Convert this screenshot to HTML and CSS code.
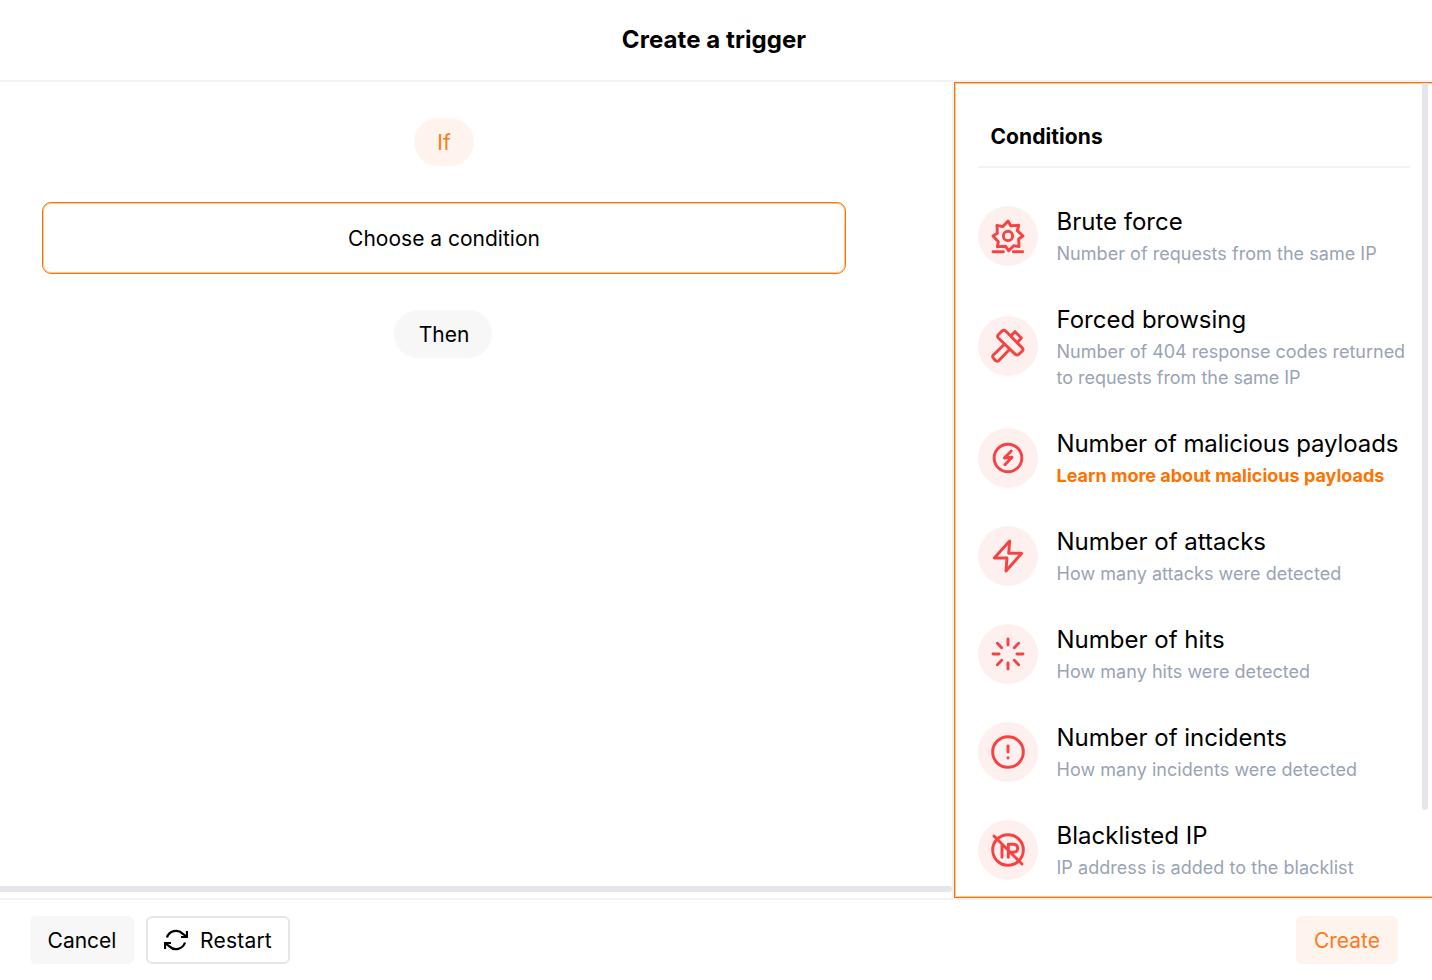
FILE: index.html
```html
<!DOCTYPE html>
<html lang="en">
<head>
<meta charset="utf-8">
<title>Create a trigger</title>
<link rel="stylesheet" href="styles.css">
</head>
<body>
<div class="app">
  <header class="header"><h1 class="title">Create a trigger</h1></header>
  <main class="main">
    <section class="flow">
      <div class="steps">
        <span class="pill pill-if">If</span>
        <div class="choose">Choose a condition</div>
        <span class="pill pill-then">Then</span>
      </div>
      <div class="hscroll"></div>
    </section>
    <aside class="panel">
      <div class="panel-body">
        <h2 class="panel-title">Conditions</h2>
        <ul class="list">
          <li class="item">
            <span class="badge"><svg class="icon" viewBox="0 0 108 108"><path d="M54 9L62 23 86 22 82 38 99 54 86 63 87 86 71 83 56 98 47 85 22 86 25 71 9 54 22 46 21 22 38 26z"/><circle cx="54" cy="54" r="14"/><path d="M9 101h31M70 101h28"/></svg></span>
            <div class="text"><div class="name">Brute force</div><div class="desc">Number of requests from the same IP</div></div>
          </li>
          <li class="item item-tall">
            <span class="badge"><svg class="icon" viewBox="0 0 108 108"><path d="M25 20L36 9q6-5 11 0l50 51q4 5 0 9L86 79q-5 4-10 0L25 30q-4-5 0-10z"/><path d="M43 49L10 81q-4 5 0 9l7 8q5 4 9 0l33-34M66 20l9-9 19 19-8 9"/></svg></span>
            <div class="text"><div class="name">Forced browsing</div><div class="desc desc-wrap">Number of 404 response codes returned to requests from the same IP</div></div>
          </li>
          <li class="item">
            <span class="badge"><svg class="icon" viewBox="0 0 108 108"><circle cx="54" cy="54" r="41.5"/><path d="M64 33L43 54l23-2L45 74"/></svg></span>
            <div class="text"><div class="name name-long">Number of malicious payloads</div><a class="desc link">Learn more about malicious payloads</a></div>
          </li>
          <li class="item">
            <span class="badge"><svg class="icon" viewBox="0 0 108 108"><path d="M59 9L13 60h38l-3 39 47-53H56z"/></svg></span>
            <div class="text"><div class="name">Number of attacks</div><div class="desc">How many attacks were detected</div></div>
          </li>
          <li class="item">
            <span class="badge"><svg class="icon" viewBox="0 0 108 108"><path d="M54 9v18M54 81v18M9 54h18M81 54h18M22 22l13 13M73 73l13 13M86 22L73 35M35 73L22 86"/></svg></span>
            <div class="text"><div class="name">Number of hits</div><div class="desc">How many hits were detected</div></div>
          </li>
          <li class="item">
            <span class="badge"><svg class="icon" viewBox="0 0 108 108"><circle cx="54" cy="54" r="46"/><path d="M54 36v18M54 71v1"/></svg></span>
            <div class="text"><div class="name">Number of incidents</div><div class="desc">How many incidents were detected</div></div>
          </li>
          <li class="item">
            <span class="badge"><svg class="icon" viewBox="0 0 108 108"><circle cx="54" cy="54" r="46"/><path d="M12 12l84 84M36 38v38M55 76V37h15q13 0 13 12t-13 12H55"/></svg></span>
            <div class="text"><div class="name">Blacklisted IP</div><div class="desc">IP address is added to the blacklist</div></div>
          </li>
        </ul>
      </div>
      <div class="vscroll"></div>
    </aside>
  </main>
  <footer class="footer">
    <button class="btn btn-cancel">Cancel</button>
    <button class="btn btn-restart"><svg class="restart-icon" viewBox="0 0 24 24"><path d="M23 3v6h-6M1 21v-6h6"/><path d="M3 9.5A9.4 9.4 0 0 1 18.6 5.6L23 9M1 15l4.4 3.4A9.4 9.4 0 0 0 21 14.5"/></svg>Restart</button>
    <button class="btn btn-create">Create</button>
  </footer>
</div>
</body>
</html>
```
FILE: styles.css
```css
* { box-sizing: border-box; }
body { margin: 0; background: #fff; color: #000; font-family: Inter, "Liberation Sans", sans-serif; }
.app { display: flex; flex-direction: column; height: 980px; overflow: hidden; }
.header { height: 82px; border-bottom: 2px solid #f2f2f3; padding: 0 4px 0 0; display: flex; align-items: center; justify-content: center; }
.title { margin: 0; font-size: 24px; line-height: 32px; font-weight: 700; letter-spacing: 0.07px; }
.main { display: flex; height: 816px; }
.flow { width: 954px; border-right: 2px solid #f2f2f3; display: flex; flex-direction: column; }
.steps { flex: 1; display: flex; flex-direction: column; align-items: center; padding: 36px 106px 0 42px; }
.pill { height: 48px; border-radius: 24px; font-size: 21px; line-height: 49px; text-align: center; }
.pill-if { width: 60px; background: #fff3ee; color: #fc7a1c; }
.pill-then { width: 98px; margin-right: 2px; padding-left: 2px; background: #f7f7f7; }
.choose { align-self: stretch; height: 72px; margin: 36px 0; border: 1.5px solid #fc7303; border-radius: 9px; box-shadow: inset 0 0 0 1px #fec795; font-size: 21px; line-height: 71px; text-align: center; }
.hscroll { height: 6px; margin-bottom: 6px; background: #e5e6eb; border-radius: 0 3px 3px 0; }
.panel { flex: 1; display: flex; border: 1px solid #fc7303; border-right: 0; box-shadow: inset 0 1px #fec795, inset 1px 0 #fec795, inset 0 -1px #fec795; overflow: hidden; }
.panel-body { width: 467px; padding: 29px 12px 0 23px; flex: none; }
.panel-title { margin: 0; height: 56px; padding: 9px 0 0 12.5px; border-bottom: 2px solid #f2f2f3; font-size: 21px; line-height: 32px; font-weight: 700; letter-spacing: 0.08px; }
.list { list-style: none; margin: 19px 0 0; padding: 0; }
.item { display: flex; align-items: center; height: 98px; }
.item-tall { height: 124px; }
.item-tall .badge { margin-bottom: 2px; }
.badge { flex: none; width: 60px; height: 60px; border-radius: 50%; background: #fff0f0; display: flex; align-items: center; justify-content: center; }
.icon { width: 36px; height: 36px; fill: none; stroke: #f54343; stroke-width: 8.8; stroke-linecap: round; stroke-linejoin: round; overflow: visible; }
.text { width: 360px; margin: 0 -12px 0 18.5px; flex: none; }
.name { font-size: 24px; line-height: 36px; margin: -1px 0 1px; white-space: nowrap; }
.name-long { letter-spacing: -0.09px; }
.desc { display: block; font-size: 18px; line-height: 26px; letter-spacing: 0.04px; color: #9aa3b5; }
.desc-wrap { letter-spacing: -0.02px; }
.link { color: #fc7303; font-weight: 700; letter-spacing: 0; }
.vscroll { width: 6px; height: 727px; background: #e5e6eb; border-radius: 0 0 3px 3px; }
.footer { height: 82px; border-top: 2px solid #f2f2f3; padding: 16px 34px 0 30px; display: flex; gap: 12px; }
.btn { height: 48px; border: 0; border-radius: 6px; padding: 2px 0 0; font: 400 21px/46px Inter, "Liberation Sans", sans-serif; color: #000; display: flex; align-items: center; justify-content: center; }
.btn-cancel { width: 104px; background: #f7f7f7; }
.btn-restart { width: 144px; background: #fff; border: 2px solid #e5e6eb; gap: 12px; letter-spacing: 0.2px; }
.restart-icon { width: 24px; height: 24px; margin-top: -2px; fill: none; stroke: #000; stroke-width: 2.2; }
.btn-create { width: 102px; margin-left: auto; background: #fff3ee; color: #fc7a1c; }
```
